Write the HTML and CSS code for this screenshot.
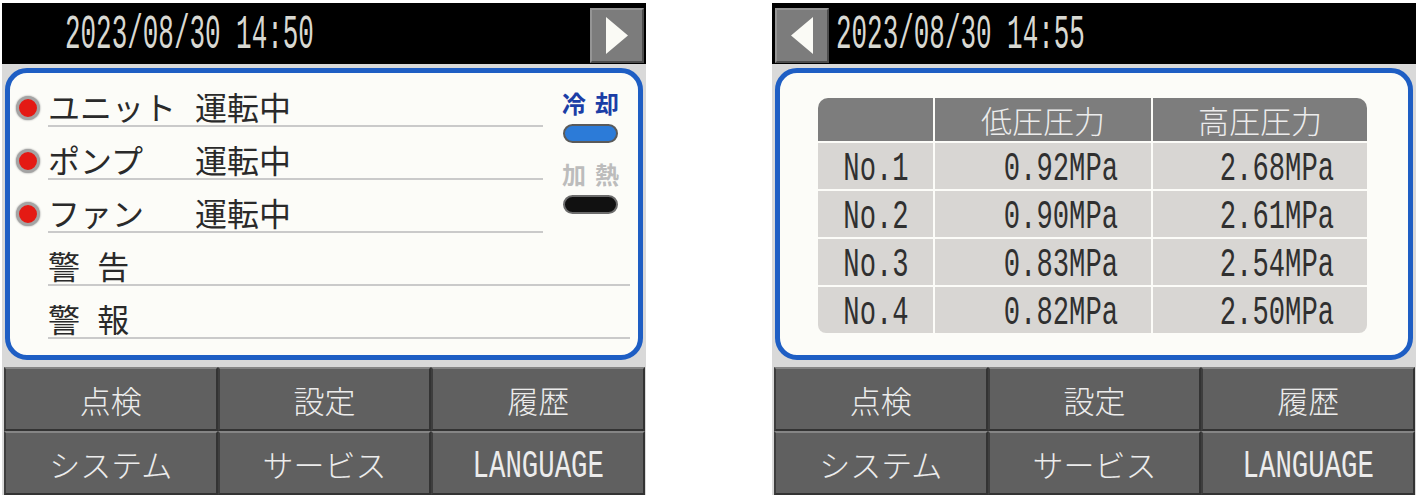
FILE: index.html
```html
<html>
<head>
<title>Chiller Panel</title>
<meta charset="utf-8">
<link rel="stylesheet" href="styles.css">
</head>
<body>
  <div class="screens">

    <!-- status screen -->
    <section class="panel">
      <div class="topbar clock-first">
        <span class="seg clock">2023/08/30 14:50</span>
        <div class="nav-btn next">
          <svg width="22" height="37" viewBox="0 0 22 37"><polygon points="0,0 22,18.5 0,37" fill="#fafaf5"/></svg>
        </div>
      </div>
      <div class="frame status">
        <div class="status-top">
          <div class="status-rows">
            <div class="row"><div class="dot-cell"><span class="dot"></span></div><div class="line"><span class="label">ユニット</span><span>運転中</span></div></div>
            <div class="row"><div class="dot-cell"><span class="dot"></span></div><div class="line"><span class="label">ポンプ</span><span>運転中</span></div></div>
            <div class="row"><div class="dot-cell"><span class="dot"></span></div><div class="line"><span class="label">ファン</span><span>運転中</span></div></div>
          </div>
          <div class="mode">
            <div class="mode-name cool">冷却</div>
            <div class="pill blue"></div>
            <div class="mode-name heat">加熱</div>
            <div class="pill black"></div>
          </div>
        </div>
        <div class="row wide"><div class="dot-cell"></div><div class="line spaced">警 告</div></div>
        <div class="row wide"><div class="dot-cell"></div><div class="line spaced">警 報</div></div>
      </div>
      <div class="keys">
        <div class="key">点検</div>
        <div class="key">設定</div>
        <div class="key">履歴</div>
        <div class="key">システム</div>
        <div class="key">サービス</div>
        <div class="key"><span class="seg lang">LANGUAGE</span></div>
      </div>
    </section>

    <!-- pressure screen -->
    <section class="panel">
      <div class="topbar">
        <div class="nav-btn prev">
          <svg width="22" height="37" viewBox="0 0 22 37"><polygon points="22,0 0,18.5 22,37" fill="#fafaf5"/></svg>
        </div>
        <span class="seg clock">2023/08/30 14:55</span>
      </div>
      <div class="frame">
        <div class="ptable">
          <div class="th corner-l"></div>
          <div class="th">低圧圧力</div>
          <div class="th corner-r">高圧圧力</div>

          <div class="td no"><span class="seg num">No.1</span></div>
          <div class="td val"><span class="seg num">0.92MPa</span></div>
          <div class="td val"><span class="seg num">2.68MPa</span></div>

          <div class="td no"><span class="seg num">No.2</span></div>
          <div class="td val"><span class="seg num">0.90MPa</span></div>
          <div class="td val"><span class="seg num">2.61MPa</span></div>

          <div class="td no"><span class="seg num">No.3</span></div>
          <div class="td val"><span class="seg num">0.83MPa</span></div>
          <div class="td val"><span class="seg num">2.54MPa</span></div>

          <div class="td no bottom-l"><span class="seg num">No.4</span></div>
          <div class="td val"><span class="seg num">0.82MPa</span></div>
          <div class="td val bottom-r"><span class="seg num">2.50MPa</span></div>
        </div>
      </div>
      <div class="keys">
        <div class="key">点検</div>
        <div class="key">設定</div>
        <div class="key">履歴</div>
        <div class="key">システム</div>
        <div class="key">サービス</div>
        <div class="key"><span class="seg lang">LANGUAGE</span></div>
      </div>
    </section>

  </div>
</body>
</html>
```

FILE: styles.css
```css
html,body { margin: 0; padding: 0; background: #fff; }
body { font-family: "Noto Sans CJK JP", "Noto Sans", sans-serif; color: #2a2a2a; }

.screens { display: flex; gap: 126px; padding: 3px 0 0 2px; }
.panel { width: 644px; height: 492px; background: #d9d9d9; display: flex; flex-direction: column; }

/* condensed "lcd" digits */
.seg { font-family: "Liberation Mono", "DejaVu Sans Mono", monospace; display: inline-block; white-space: nowrap; line-height: 1; }

.topbar { height: 61px; flex-shrink: 0; background: #000; display: flex; align-items: center; }
.clock-first { padding-left: 63px; }
.clock { font-size: 48px; color: #d8d8d2; transform: scaleX(0.54); transform-origin: left center; margin-top: 2px; }
.nav-btn { width: 54px; height: 55px; box-sizing: border-box; align-self: flex-end; margin-bottom: 1px; background: #7c7c7c; border: 2px solid #4c4c4c; border-top-color: #959595; border-left-color: #959595; display: flex; align-items: center; justify-content: center; }
.nav-btn.next { margin-left: auto; margin-right: 2px; }
.nav-btn.prev { margin-left: 3px; margin-right: 7px; }

.frame { height: 292px; flex-shrink: 0; box-sizing: border-box; margin: 4px 3px 0; border: 5px solid #1e5ec4; border-radius: 22px; background: #fcfcf8; }

/* status list */
.status { padding-top: 1px; }
.status-top { display: flex; }
.status-rows { flex: 1; }
.row { display: flex; align-items: flex-end; height: 53px; }
.row.wide { margin-right: 8px; }
.dot-cell { width: 38px; flex-shrink: 0; }
.dot { display: block; width: 18px; height: 18px; margin: 0 0 7px 6px; border-radius: 50%; background: #e41a14; border: 3px solid #a4a4a4; box-shadow: 0 0 2px #888; }
.line { flex: 1; height: 100%; box-sizing: border-box; display: flex; align-items: center; padding-top: 12px; border-bottom: 2px solid #cacaca; font-size: 32px; color: #2a2a2a; }
.label { width: 147px; }
.spaced { word-spacing: 10px; }

.mode { width: 95px; display: flex; flex-direction: column; align-items: center; padding-top: 14px; }
.mode-name { font-size: 24px; font-weight: bold; letter-spacing: 9px; margin-right: -9px; line-height: 30px; }
.cool { color: #1b3ea6; }
.heat { color: #bcbcbc; margin-top: 16px; }
.pill { width: 55px; height: 19px; box-sizing: border-box; border-radius: 10px; border: 2px solid #5a5a5a; margin-top: 6px; }
.pill.blue { background: #2c7bd8; }
.pill.black { background: #111; border-color: #6c6c6c; margin-top: 6px; }

/* pressure table */
.ptable { display: grid; grid-template-columns: 115px 216px 214px; grid-template-rows: 43px repeat(4, 46px); gap: 2px; margin: 25px 0 0 38px; }
.th { background: #7d7d7d; color: #ececec; font-size: 31px; font-weight: 300; display: flex; align-items: center; justify-content: center; }
.corner-l { border-top-left-radius: 10px; }
.corner-r { border-top-right-radius: 10px; }
.td { background: #d8d6d3; display: flex; align-items: center; padding-top: 8px; box-sizing: border-box; }
.bottom-l { border-bottom-left-radius: 8px; }
.bottom-r { border-bottom-right-radius: 8px; }
.num { font-size: 40px; color: #303030; transform: scaleX(0.68); }
.no { justify-content: center; padding-left: 2px; }
.no .num { transform-origin: center; }
.val { justify-content: flex-end; padding-right: 33px; }
.val .num { transform-origin: right center; }

/* soft keys */
.keys { flex: 1; margin: 7px 1px 0 2px; display: grid; grid-template-columns: repeat(3, 1fr); grid-template-rows: repeat(2, 1fr); }
.key { background: #606060; border: 2px solid #333; border-top-color: #858585; border-left-color: #3e3e3e; color: #ececec; font-size: 31px; font-weight: 300; display: flex; align-items: center; justify-content: center; }
.lang { font-size: 38px; color: #ececec; transform: scaleX(0.72); margin-top: 8px; }
```
